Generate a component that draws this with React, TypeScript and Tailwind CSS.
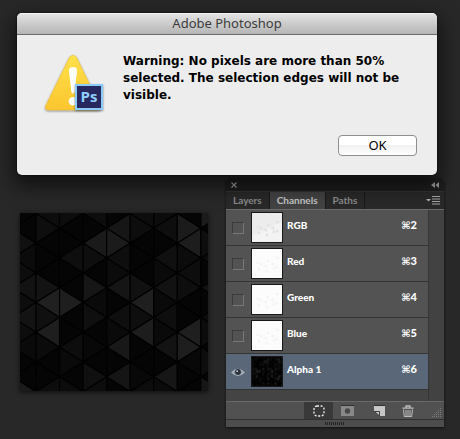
import { useState } from "react";

const COLUMN = 23.55;
const HALF = 14.85;
const FIRST_LINE = 16;

// Triangle brightness by column, then by half-row index.
const shades: Record<number, Record<number, string>> = {
  [-1]: { 2: "#101010", 3: "#0b0b0b", 4: "#0d0d0d", 5: "#121212", 6: "#0d0d0d", 7: "#131313", 8: "#0d0d0d", 9: "#0a0a0a", 12: "#1b1b1b" },
  0: { 0: "#0d0d0d", 1: "#0e0e0e", 5: "#131313", 6: "#202020", 7: "#101010", 8: "#1e1e1e", 9: "#0b0b0b", 12: "#0d0d0d" },
  1: { 0: "#0d0d0d", 3: "#0e0e0e", 6: "#1e1e1e", 9: "#0d0d0d", 10: "#0a0a0a", 12: "#0c0c0c" },
  2: { 0: "#0d0d0d", 2: "#1a1a1a", 3: "#0e0e0e", 5: "#161616", 6: "#0a0a0a", 7: "#0f0f0f", 9: "#080808", 11: "#101010", 12: "#0d0d0d" },
  3: { 1: "#161616", 2: "#1b1b1b", 3: "#0e0e0e", 4: "#0b0b0b", 5: "#151515", 7: "#0f0f0f", 8: "#0a0a0a", 9: "#181818", 11: "#151515" },
  4: { 0: "#0d0d0d", 1: "#0d0d0d", 5: "#111111", 6: "#1f1f1f", 7: "#0e0e0e", 8: "#1d1d1d", 11: "#080808", 12: "#0d0d0d" },
  5: { 0: "#0c0c0c", 1: "#0e0e0e", 3: "#101010", 4: "#0a0a0a", 5: "#121212", 6: "#0a0a0a", 7: "#0e0e0e", 8: "#0a0a0a", 9: "#131313", 11: "#161616", 12: "#0b0b0b" },
  6: { 1: "#1b1b1b", 2: "#1d1d1d", 3: "#0c0c0c", 4: "#0d0d0d", 5: "#0e0e0e", 8: "#1f1f1f", 9: "#1e1e1e", 10: "#080808" },
  7: { 0: "#1b1b1b", 2: "#0e0e0e", 3: "#0c0c0c", 5: "#121212", 7: "#0c0c0c", 8: "#0c0c0c", 10: "#0d0d0d", 12: "#161616" },
};

function triangle(col: number, row: number) {
  const left = FIRST_LINE + col * COLUMN;
  const right = left + COLUMN;
  const y = row * HALF + 0.5;
  return (col + row) % 2 === 0
    ? `${left},${y} ${right},${y - HALF} ${right},${y + HALF}`
    : `${right},${y} ${left},${y - HALF} ${left},${y + HALF}`;
}

function Pattern({ className }: { className: string }) {
  const cells = [];
  for (let col = -1; col < 8; col++) {
    for (let row = 0; row <= 12; row++) {
      cells.push(
        <polygon key={`${col}:${row}`} points={triangle(col, row)} fill={shades[col]?.[row] ?? "#050505"} stroke="#020202" strokeWidth="1.2" />,
      );
    }
  }
  return (
    <svg viewBox="0 0 188 178" preserveAspectRatio="none" className={className} aria-hidden="true">
      <rect width="188" height="178" fill="#050505" />
      {cells}
    </svg>
  );
}

function WarningIcon() {
  return (
    <svg viewBox="0 0 64 60" className="mt-px h-[60px] w-[64px] shrink-0" role="img" aria-label="Photoshop warning">
      <defs>
        <linearGradient id="amber" x1="0" y1="0" x2="0" y2="1">
          <stop offset="0" stopColor="#ffe14a" />
          <stop offset="1" stopColor="#fbc52f" />
        </linearGradient>
        <filter id="soft" x="-20%" y="-20%" width="140%" height="140%">
          <feDropShadow dx="0" dy="1" stdDeviation="0.8" floodOpacity="0.45" />
        </filter>
      </defs>
      <path d="M26.400 3.500Q30 -1 33.600 3.500L57 51.500Q58.500 56 54 56H6Q1 56 2.800 51.500Z" fill="url(#amber)" stroke="#e8b530" strokeWidth="0.5" filter="url(#soft)" />
      <path d="M25.900 16.500Q26 13 30 13T34.100 16.500L31.700 37.500Q31.500 39.500 30 39.500T28.300 37.500Z" fill="#fff" />
      <circle cx="30" cy="47.200" r="4.300" fill="#fff" />
      <g filter="url(#soft)">
        <rect x="32" y="30" width="28" height="26" fill="#8ccafa" />
      </g>
      <rect x="34" y="32" width="24" height="22" fill="#26285f" />
      <text x="46" y="48" textAnchor="middle" fontFamily="Open Sans, sans-serif" fontSize="15" fontWeight="700" fill="#8fd0ff">Ps</text>
    </svg>
  );
}

const channels = [
  { name: "RGB", key: "2" },
  { name: "Red", key: "3" },
  { name: "Green", key: "4" },
  { name: "Blue", key: "5" },
  { name: "Alpha 1", key: "6" },
];

function PaleThumb({ shaded }: { shaded: boolean }) {
  return (
    <svg viewBox="0 0 30 29" className="h-full w-full" aria-hidden="true">
      <rect width="30" height="29" fill={shaded ? "#f3f3f3" : "#fcfcfc"} />
      {shaded && <path d="M0 0H30V9L0 22Z" fill="#e9e8e9" opacity="0.6" />}
      <g fill={shaded ? "#e3e1e3" : "#f4f4f4"}>
        <path d="M4 14l3-2v4zM8 13l3 2-3 2zM11 17l4-2v4zM15 10l3 2-3 2zM18 15l4-2v4zM24 7l4 2-4 2zM24 16l3 2-3 2zM5 20l3-2v4zM13 22l3-2v4zM20 19l3-2v4z" />
      </g>
    </svg>
  );
}

function Eye() {
  return (
    <svg viewBox="0 0 14 10" className="pointer-events-none col-start-1 row-start-1 h-[10px] w-[14px]" aria-hidden="true">
      <path d="M1 5.500Q7 -1 13 5.500Q7 11 1 5.500Z" fill="#8b959f" stroke="#aab3bb" strokeWidth="1.200" />
      <circle cx="7" cy="5" r="2.900" fill="#29323d" />
      <circle cx="6.200" cy="4.200" r="0.900" fill="#c5ccd2" />
    </svg>
  );
}

export default function App() {
  const [tab, setTab] = useState("Channels");
  const [selected, setSelected] = useState("Alpha 1");

  return (
    <main className="min-h-screen bg-[#282828] pt-[13px] pr-4 pb-3 pl-[17px] font-['Lato','Open_Sans',sans-serif]">
      <section
        role="alertdialog"
        aria-labelledby="dialog-title"
        className="relative z-10 mr-[7px] overflow-hidden rounded-[5px] bg-[#ededed] shadow-[0_0_2px_#000,0_8px_20px_4px_rgba(0,0,0,0.55)]"
      >
        <h1
          id="dialog-title"
          className="flex h-[22px] items-center justify-center border-t border-b border-t-[#f4f4f4] border-b-[#6b6b6b] bg-linear-to-b from-[#e2e2e2] to-[#b5b5b5] font-['Noto_Sans',sans-serif] text-[13px] text-[#3c3c3c]"
        >
          Adobe Photoshop
        </h1>
        <div className="flex gap-4 pt-[18px] pr-5 pl-[26px]">
          <WarningIcon />
          <p className="max-w-[290px] font-['DejaVu_Sans',sans-serif] text-[12px] leading-[17px] font-bold text-black">
            Warning: No pixels are more than 50% selected. The selection edges will not be visible.
          </p>
        </div>
        <div className="flex justify-end pt-[21px] pr-5 pb-[19px]">
          <button
            type="button"
            className="flex h-[21px] w-[79px] items-center justify-center rounded-[4px] border border-[#8f8f8f] bg-linear-to-b from-white from-45% via-[#f1f1f1] via-50% to-white font-['Noto_Sans',sans-serif] text-[13px] text-black"
          >
            OK
          </button>
        </div>
      </section>

      <div className="mt-[3px] flex items-start justify-between pl-[3px]">
        <div className="mt-[35px] h-[178px] w-[188px] shadow-[0_1px_5px_rgba(0,0,0,0.7)]">
          <Pattern className="h-full w-full" />
        </div>

        <aside className="w-[218px] overflow-hidden rounded-t-[4px] bg-[#535353] shadow-[0_1px_3px_rgba(0,0,0,0.6)]">
          <div className="flex h-[13px] items-center justify-between bg-[#1e1e1e] px-[5px] text-[#a0a0a0]">
            <button type="button" aria-label="Close panel">
              <svg viewBox="0 0 6 6" className="size-[6px]">
                <path d="M0.500 0.500L5.500 5.500M5.500 0.500L0.500 5.500" stroke="currentColor" strokeWidth="1.200" />
              </svg>
            </button>
            <button type="button" aria-label="Collapse panel">
              <svg viewBox="0 0 8 6" className="h-[6px] w-[8px]" fill="currentColor">
                <path d="M4 0V6L0 3ZM8 0V6L4.500 3Z" />
              </svg>
            </button>
          </div>

          <div className="flex h-[18px] border-t border-[#343434] bg-[#292929]">
            <div role="tablist" className="flex flex-1">
              {["Layers", "Channels", "Paths"].map((name) => (
                <button
                  key={name}
                  type="button"
                  role="tab"
                  aria-selected={tab === name}
                  onClick={() => setTab(name)}
                  className={`border-r border-[#191919] px-[7px] text-[10px] leading-[17px] font-bold ${
                    tab === name ? "bg-[#434343] text-[#c4c4c4]" : "text-[#8b8b8b]"
                  }`}
                >
                  {name}
                </button>
              ))}
            </div>
            <button type="button" aria-label="Panel menu" className="pr-1">
              <svg viewBox="0 0 14 9" className="h-[9px] w-[14px]">
                <path d="M0 3H5L2.500 5.500Z" fill="#b0b0b0" />
                <path d="M6 0.500H14M6 3.000H14M6 5.500H14M6 8H14" stroke="#a5a5a5" />
              </svg>
            </button>
          </div>

          <div className="flex h-[192px] border-t border-[#6c6c6c] bg-[#444444]">
            <ul className="flex-1">
              {channels.map(({ name, key }) => (
                <li
                  key={name}
                  onClick={() => setSelected(name)}
                  className={`flex h-9 items-center border-b border-[#343434] pr-[11px] text-[10px] font-black text-white ${
                    selected === name ? "bg-[#5a6779]" : "bg-[#535353]"
                  }`}
                >
                  <span className="grid w-[25px] place-items-center pr-[2px]">
                    <input
                      type="checkbox"
                      aria-label={`Show ${name}`}
                      defaultChecked={name === "Alpha 1"}
                      className={`col-start-1 row-start-1 size-3 appearance-none ${
                        name === "Alpha 1" ? "" : "border border-t-[#3b3b3b] border-r-[#777777] border-b-[#777777] border-l-[#3b3b3b]"
                      }`}
                    />
                    {name === "Alpha 1" && <Eye />}
                  </span>
                  <span className="h-[31px] w-8 border border-[#181818]">
                    {name === "Alpha 1" ? <Pattern className="h-full w-full" /> : <PaleThumb shaded={name === "RGB"} />}
                  </span>
                  <span className="flex-1 pb-1 pl-1">{name}</span>
                  <span className="flex items-center pb-1 text-[11px]">
                    <span className="font-['DejaVu_Sans',sans-serif] text-[10px] font-bold">⌘</span>
                    {key}
                  </span>
                </li>
              ))}
            </ul>
            <div className="w-4 border-l border-[#383838] bg-[#424242]" />
          </div>

          <div className="relative flex h-[18px] items-center border-t border-[#686868] bg-[#515151]">
            <div className="flex flex-1 items-center justify-end self-stretch pr-[30px]">
              <button type="button" aria-label="Load channel as selection" className="flex h-full w-[29px] items-center justify-center bg-[#393939]">
                <svg viewBox="0 0 12 12" className="size-3">
                  <rect x="1" y="1" width="10" height="10" rx="3" fill="none" stroke="#f0f0f0" strokeWidth="1.300" strokeDasharray="2 1.600" />
                </svg>
              </button>
              <button type="button" aria-label="Save selection as channel" className="ml-2">
                <svg viewBox="0 0 13 11" className="h-[11px] w-[13px]">
                  <rect width="13" height="11" fill="#888888" />
                  <path d="M0 0.500H13" stroke="#303030" />
                  <circle cx="6.500" cy="6" r="2.700" fill="#484848" />
                </svg>
              </button>
              <button type="button" aria-label="New channel" className="ml-5">
                <svg viewBox="0 0 11 11" className="size-[11px]">
                  <path d="M0 1H11V11H6V6H0Z" fill="#c6c6c6" />
                  <path d="M0 0.500H11" stroke="#303030" />
                  <path d="M0.500 6.500H5.500V11Z" fill="#c6c6c6" stroke="#303030" strokeWidth="0.800" />
                </svg>
              </button>
              <button type="button" aria-label="Delete channel" className="ml-[17px]">
                <svg viewBox="0 0 12 12" className="size-3" fill="none" stroke="#bdbdbd">
                  <path d="M0.500 3.200H11.500M4 2.500V1H8V2.500" strokeWidth="1.300" />
                  <path d="M1.500 4.500L2.300 11.500H9.700L10.500 4.500M4 5V11M6 5V11M8 5V11" />
                </svg>
              </button>
            </div>
            <svg viewBox="0 0 10 10" className="absolute right-[2px] bottom-px size-[10px]" fill="#7a7a7a" aria-hidden="true">
              <path d="M8 0h1v1H8zM6 2h1v1H6zM8 2h1v1H8zM4 4h1v1H4zM6 4h1v1H6zM8 4h1v1H8zM2 6h1v1H2zM4 6h1v1H4zM6 6h1v1H6zM8 6h1v1H8zM0 8h1v1H0zM2 8h1v1H2zM4 8h1v1H4zM6 8h1v1H6zM8 8h1v1H8z" />
            </svg>
          </div>
          <div className="flex h-2 items-center justify-center border-t border-[#303030] bg-[#4d4d4d]">
            <svg viewBox="0 0 20 3" className="h-[3px] w-5" aria-hidden="true">
              <path d="M0 1.500H20" stroke="#232323" strokeWidth="3" strokeDasharray="1 1" />
            </svg>
          </div>
        </aside>
      </div>
    </main>
  );
}
